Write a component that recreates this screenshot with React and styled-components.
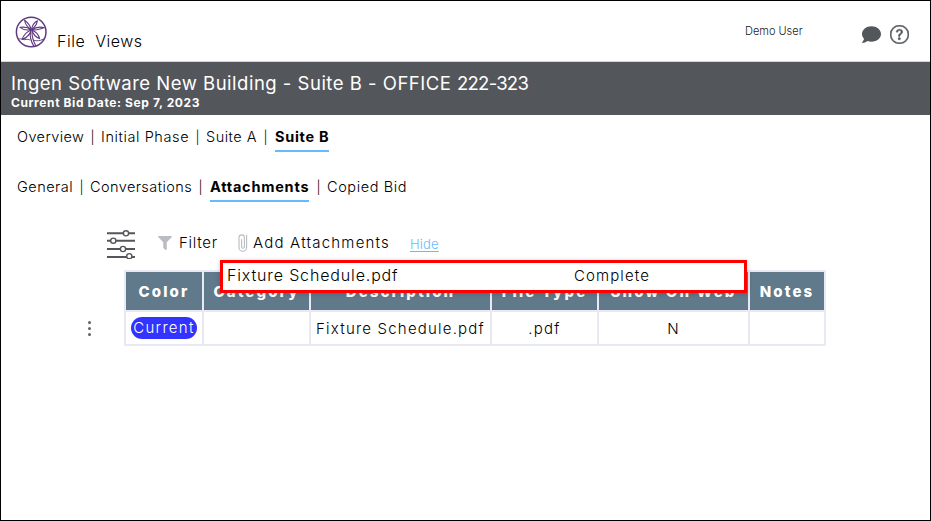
import React from "react";
import styled, { createGlobalStyle } from "styled-components";
import { FaComment, FaFilter } from "react-icons/fa";
import { BsQuestionCircle } from "react-icons/bs";

const phases = [
  { label: "Overview", width: 67, spacing: 0.4 },
  { label: "Initial Phase", width: 88, spacing: 0.6 },
  { label: "Suite A", width: 51, spacing: 0.5 },
  { label: "Suite B", width: 54, spacing: 0.7, active: true },
];

const sections = [
  { label: "General", width: 56, spacing: 0.5 },
  { label: "Conversations", width: 102, spacing: 0.42 },
  { label: "Attachments", width: 99, spacing: 0.77, active: true },
  { label: "Copied Bid", width: 80, spacing: 0.6 },
];

const columns = [
  "Color",
  "Category",
  "Description",
  "File Type",
  "Show On Web",
  "Notes",
];

const PalmLogo = () => (
  <svg width="32" height="32" viewBox="0 0 32 32" fill="none" stroke="#5f3a80">
    <circle cx="16.2" cy="16" r="14.8" strokeWidth="1.5" />
    <g strokeWidth="1.1" strokeLinejoin="round">
      <path d="M16.4 13.8C15.4 10 12.6 6.4 9.6 4.2C10 7.4 12.6 11.4 16.4 13.8Z" />
      <path d="M16 13.6C13 11.2 9 10.8 5 11.4C7.6 13.4 12 14.6 16 13.6Z" />
      <path d="M16.6 13.4C17.2 9.6 19.4 6.4 22.4 4.8C21.8 8 19.6 11.4 16.6 13.4Z" />
      <path d="M16.8 13.8C20.4 11.2 25 10.6 29.4 11.8C25.4 12.6 21.4 14.6 16.8 13.8Z" />
      <path d="M16.2 14C12 15.6 8.6 18.8 7 23.6C11.4 22 15 18.4 16.2 14Z" />
      <path d="M16.8 14C20.8 15.6 23.6 18.6 24.6 22.6C20.8 21 17.8 18 16.8 14Z" />
      <path d="M15.6 15C14.6 20 16 25.6 19 30.4M17 15.6C16.8 20.4 18.2 25 20.8 29.8" />
    </g>
    <path
      d="M3.6 23.4C6 21.4 8 24.6 11 23.4C12.4 22.8 13.6 23.8 15.2 24M18.4 24.2C21.6 25.2 25 25 28.6 23"
      strokeWidth="0.9"
    />
  </svg>
);

const SlidersIcon = () => (
  <svg width="28" height="30" viewBox="0 0 28 30" stroke="#53565a">
    <path d="M0 4.3h28M0 11.7h28M0 20h28M0 28h28" strokeWidth="2" />
    <g fill="#fff" strokeWidth="1.4">
      <circle cx="19" cy="4.3" r="2.6" />
      <circle cx="6.3" cy="11.7" r="2.6" />
      <circle cx="16" cy="20" r="2.6" />
      <circle cx="22.3" cy="27.2" r="2.6" />
    </g>
  </svg>
);

const ClipIcon = () => (
  <svg width="10" height="18" viewBox="0 0 10 18" fill="none" stroke="#b9bcc2">
    <path
      d="M8.6 1V13.5A3.8 3.8 0 0 1 1 13.5V3.6A2.7 2.7 0 0 1 6.4 3.6V12.8A1.4 1.4 0 0 1 3.6 12.8V5.5"
      strokeWidth="1.1"
      strokeLinecap="round"
    />
  </svg>
);

const TabRow = ({ items }) => (
  <Tabs>
    {items.map((item, i) => (
      <React.Fragment key={item.label}>
        {i > 0 && <Divider>|</Divider>}
        <Tab $active={item.active} $width={item.width} $spacing={item.spacing}>
          {item.label}
        </Tab>
      </React.Fragment>
    ))}
  </Tabs>
);

const App = () => {
  return (
    <>
      <GlobalStyle />
      <Page>
        <Header>
          <PalmLogo />
          <Menu>
            <MenuItem>File</MenuItem>
            <MenuItem>Views</MenuItem>
          </Menu>
          <User>Demo User</User>
          <HeaderIcons>
            <FaComment size={19} />
            <BsQuestionCircle size={19} stroke="currentColor" strokeWidth="0.4" />
          </HeaderIcons>
        </Header>
        <Banner>
          <Title>
            Ingen Software New Building - Suite B - OFFICE{" "}
            <Suites>222-323</Suites>
          </Title>
          <BidDate>Current Bid Date: Sep 7, 2023</BidDate>
        </Banner>
        <Navigation>
          <TabRow items={phases} />
          <TabRow items={sections} />
        </Navigation>
        <Toolbar>
          <SlidersIcon />
          <FilterButton>
            <FaFilter size={14} color="#b9bcc2" />
            Filter
          </FilterButton>
          <AttachButton>
            <ClipIcon />
            Add Attachments
          </AttachButton>
          <HideLink>Hide</HideLink>
          <Upload>
            <FileName>Fixture Schedule.pdf</FileName>
            <Status>Complete</Status>
          </Upload>
        </Toolbar>
        <TableArea>
          <RowMenu>
            <Dot />
            <Dot />
            <Dot />
          </RowMenu>
          <Table>
            {columns.map((column) => (
              <HeadCell key={column}>{column}</HeadCell>
            ))}
            <Cell>
              <Pill>Current</Pill>
            </Cell>
            <Cell />
            <Cell>Fixture Schedule.pdf</Cell>
            <Cell>.pdf</Cell>
            <Cell>N</Cell>
            <Cell />
          </Table>
        </TableArea>
      </Page>
    </>
  );
};

export default App;

const GlobalStyle = createGlobalStyle`
  * {
    box-sizing: border-box;
  }
  body {
    margin: 0;
    background: #fff;
    color: #000;
    font-family: Inter, "Open Sans", sans-serif;
  }
  svg {
    display: block;
    flex: none;
  }
`;

const Page = styled.div`
  display: flex;
  flex-direction: column;
  width: 931px;
  height: 521px;
  border: 1px solid #000;
  white-space: nowrap;
  overflow: hidden;
`;

const Header = styled.header`
  display: flex;
  align-items: flex-start;
  height: 61px;
  padding: 15px 20px 0 14px;
  border-bottom: 1px solid #d5d7d9;
`;

const Menu = styled.nav`
  display: flex;
  gap: 10px;
  margin: 15px 0 0 10px;
`;

const MenuItem = styled.span`
  font-size: 16px;
  font-weight: 300;
  line-height: 20px;
  letter-spacing: 0.5px;
`;

const User = styled.span`
  width: 60px;
  margin-left: auto;
  font-size: 11px;
  font-weight: 300;
  line-height: 30px;
  color: #222;
`;

const HeaderIcons = styled.div`
  display: flex;
  align-items: center;
  gap: 9px;
  height: 36px;
  margin-left: 57px;
  padding-right: 1px;
  color: #53565a;
`;

const Banner = styled.div`
  height: 53px;
  padding: 11px 10px 0;
  background: #53565a;
  color: #fff;
`;

const Title = styled.h1`
  margin: 0;
  font-size: 18.5px;
  font-weight: 400;
  line-height: 21px;
  letter-spacing: 0.5px;
`;

const Suites = styled.span`
  letter-spacing: -0.75px;
`;

const BidDate = styled.p`
  margin: 0;
  font-size: 12px;
  font-weight: 700;
  line-height: 17px;
  letter-spacing: 0.6px;
`;

const Navigation = styled.div`
  display: flex;
  flex-direction: column;
  gap: 24px;
  padding: 11px 16px 0;
`;

const Tabs = styled.nav`
  display: flex;
  height: 26px;
`;

const Tab = styled.span`
  width: ${({ $width }) => $width}px;
  margin: ${({ $active }) => ($active ? "0 1px" : "0")};
  border-bottom: ${({ $active }) => ($active ? "2px solid #66bbff" : "none")};
  font-size: 14.5px;
  font-weight: ${({ $active }) => ($active ? 700 : 300)};
  line-height: 22px;
  letter-spacing: ${({ $spacing }) => $spacing}px;
`;

const Divider = styled.span`
  width: 17px;
  font-size: 13px;
  font-weight: 300;
  line-height: 23px;
  text-align: center;
`;

const Toolbar = styled.div`
  position: relative;
  display: flex;
  align-items: center;
  height: 30px;
  margin: 27px 0 0 106px;
`;

const Button = styled.span`
  display: flex;
  align-items: center;
  font-size: 15px;
  font-weight: 300;
  line-height: 20px;
  margin-bottom: 3px;
`;

const FilterButton = styled(Button)`
  gap: 7px;
  width: 103px;
  padding-left: 23px;
  letter-spacing: 0.7px;
`;

const AttachButton = styled(Button)`
  gap: 5px;
  width: 172px;
  letter-spacing: 1.2px;
`;

const HideLink = styled.a`
  font-size: 13px;
  font-weight: 300;
  line-height: 18px;
  letter-spacing: 0.2px;
  color: #66bbff;
  text-decoration: underline;
  text-underline-offset: 2px;
`;

/* upload progress sits over the top of the attachments table */
const Upload = styled.div`
  position: absolute;
  z-index: 1;
  top: 31px;
  left: 113px;
  display: flex;
  width: 527px;
  height: 33px;
  padding-left: 4px;
  border: 3px solid #f00;
  background: #fff;
  box-shadow: 0 1px 5px rgba(0, 0, 0, 0.2);
`;

const FileName = styled.span`
  width: 347px;
  font-size: 16px;
  font-weight: 300;
  line-height: 24px;
  letter-spacing: 0.85px;
`;

const Status = styled.span`
  font-size: 15px;
  font-weight: 300;
  line-height: 25px;
  letter-spacing: 1.1px;
`;

const TableArea = styled.div`
  display: flex;
  align-items: flex-end;
  margin: 11px 0 0 86px;
`;

const RowMenu = styled.div`
  display: flex;
  flex-direction: column;
  align-items: center;
  gap: 3px;
  width: 5px;
  margin: 0 32px 10px 0;
`;

const Dot = styled.span`
  width: 3px;
  height: 3px;
  border-radius: 50%;
  background: #66605c;
`;

const Table = styled.div`
  display: grid;
  grid-template-columns: 76px 105px 179px 105px 149px 74px;
  grid-template-rows: 38px 32px;
  gap: 2px;
  padding: 2px;
  background: #e9e9f3;
`;

const Cell = styled.div`
  display: flex;
  align-items: center;
  justify-content: center;
  background: #fff;
  font-size: 15px;
  font-weight: 300;
  letter-spacing: 1.2px;
`;

const HeadCell = styled(Cell)`
  background: #60798b;
  color: #fff;
  font-weight: 800;
  letter-spacing: 2.1px;
`;

const Pill = styled.span`
  width: 66px;
  height: 22px;
  border-radius: 11px;
  background: #33f;
  color: #fff;
  line-height: 22px;
  text-align: center;
  letter-spacing: 1.3px;
`;
